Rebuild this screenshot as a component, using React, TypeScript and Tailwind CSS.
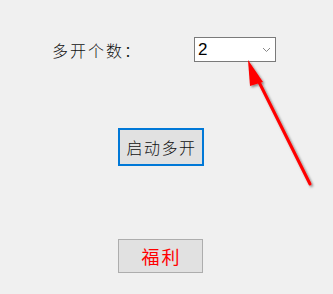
import React from "react";

export default function App() {
    return (
        <div className="relative h-[294px] w-[333px] overflow-hidden bg-[#f0f0f0] font-['Noto_Sans_CJK_SC',sans-serif]">
            {/* Count row */}
            <div className="flex items-center pl-[52px] pt-[37px]">
                <span className="w-[142px] text-[16px] font-light leading-none tracking-[2px] text-[#111]">
                    多开个数：
                </span>
                <div className="flex h-[25px] w-[82px] items-center justify-between border border-[#7a7a7a] bg-white pl-[3px] pr-[4px]">
                    <span className="font-['Liberation_Sans',sans-serif] text-[17px] leading-none text-black">2</span>
                    <svg width="9" height="6" viewBox="0 0 9 6" className="mt-[1px]">
                        <path d="M1 1 L4.5 4.5 L8 1" fill="none" stroke="#888" strokeWidth="1" />
                    </svg>
                </div>
            </div>

            {/* Start button */}
            <div className="mt-[66px] pl-[118px]">
                <button className="flex h-[38px] w-[86px] items-center justify-center border-2 border-[#0078d7] bg-[#e1e1e1] pl-[1px] text-[16px] font-light tracking-[1.5px] text-[#111]">
                    启动多开
                </button>
            </div>

            {/* Bonus button */}
            <div className="mt-[73px] pl-[118px]">
                <button className="flex h-[34px] w-[85px] items-center justify-center border border-[#adadad] bg-[#e1e1e1] pl-[2px] text-[18px] tracking-[2px] text-[#ff0000]">
                    福利
                </button>
            </div>

            {/* Annotation arrow */}
            <svg className="pointer-events-none absolute left-0 top-0" width="333" height="294" viewBox="0 0 333 294">
                <defs>
                    <filter id="sh" x="-20%" y="-20%" width="140%" height="140%">
                        <feDropShadow dx="1.5" dy="1.5" stdDeviation="1.2" floodColor="#000" floodOpacity="0.45" />
                    </filter>
                </defs>
                <g filter="url(#sh)">
                    <line x1="310" y1="184" x2="255" y2="74" stroke="#ff0000" strokeWidth="3" strokeLinecap="round" />
                    <polygon points="248,60 263,82 250,86" fill="#ff0000" />
                </g>
            </svg>
        </div>
    );
}
